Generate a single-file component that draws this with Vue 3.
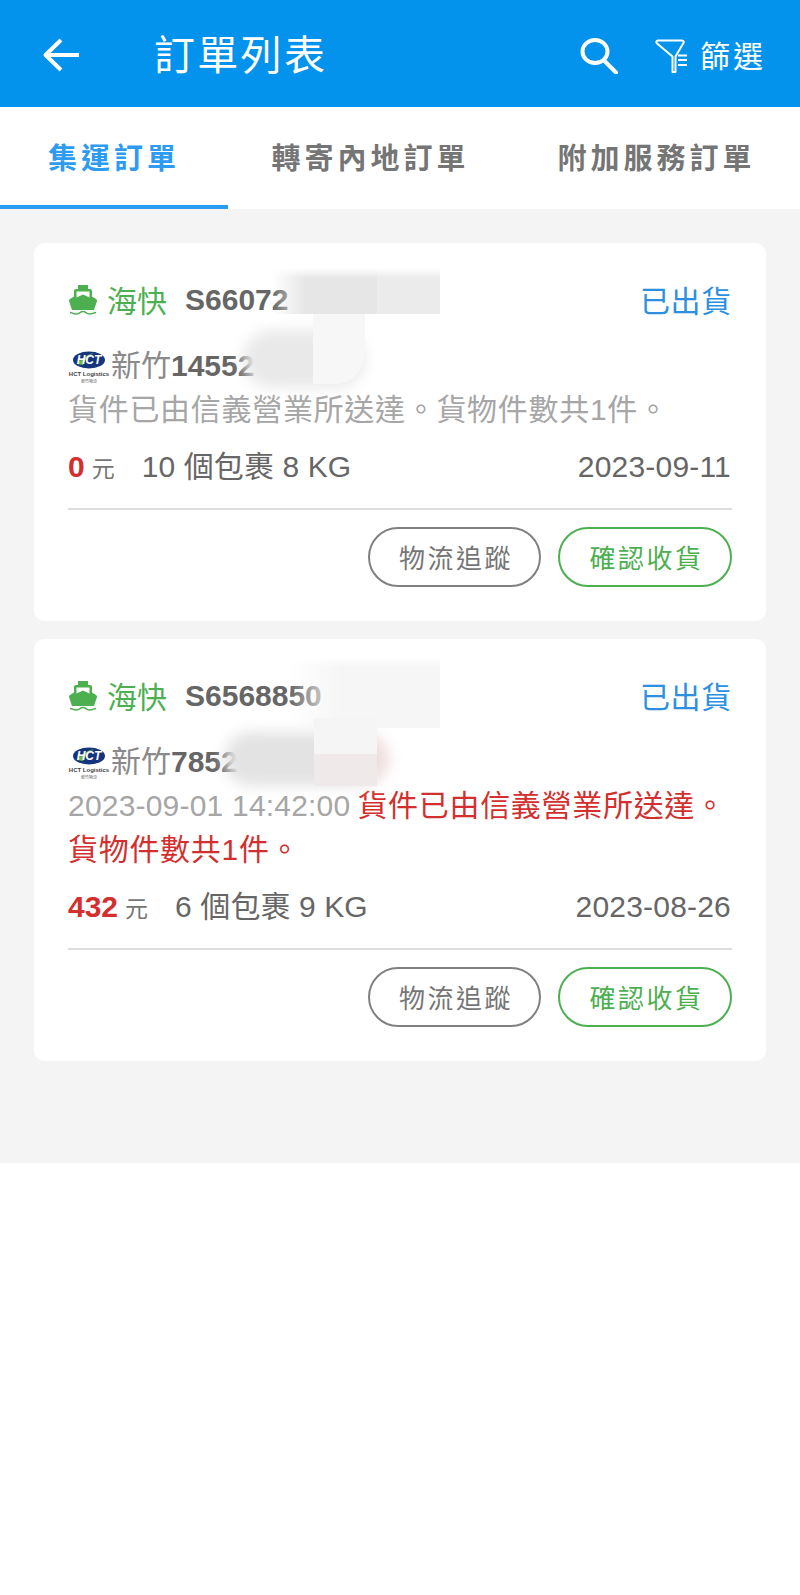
<template>
  <div class="page">
    <header class="topbar">
      <svg class="back" viewBox="0 0 38 34" fill="none" stroke="#fff" stroke-width="4">
        <path d="M19 2 3.500 17 19 32" stroke-linejoin="round" />
        <path d="M4 17h33" />
      </svg>
      <h1 class="title">訂單列表</h1>
      <svg class="search" viewBox="0 0 38 36" fill="none" stroke="#fff" stroke-width="4">
        <ellipse cx="15" cy="13.500" rx="12.500" ry="11.500" />
        <path d="m24 22.500 12 12" stroke-linecap="round" />
      </svg>
      <svg class="funnel" viewBox="0 0 33 34" fill="none" stroke="#fff" stroke-width="2">
        <path d="M3 1.500h24c1.600 0 2.200 1.500 1.300 2.800L20.500 17.500V33h-3V17.500L1.800 4.300C.9 3 1.400 1.500 3 1.500Z" stroke-linejoin="round" />
        <path d="M23 16.500h9M23 21h9M23 26h9" />
      </svg>
      <span class="filter-label">篩選</span>
    </header>

    <nav class="tabs">
      <div v-for="(t, i) in tabs" :key="t" class="tab" :class="{ active: i === 0 }">{{ t }}</div>
    </nav>

    <main class="list">
      <article v-for="o in orders" :key="o.no" class="card">
        <div class="head">
          <svg class="ship" viewBox="0 0 28 30" fill="#4caf50">
            <path d="M9 0h10v4h2a2 2 0 0 1 2 2v5.500L27 14c.9.600 1.200 1.400.9 2.200L25 25H3L.1 16.200c-.3-.8 0-1.600.9-2.200l4-2.500V6a2 2 0 0 1 2-2h2V0ZM7.500 6.500v6L14 9.500l6.500 3v-6h-13Z" fill-rule="evenodd" />
            <path d="M1 27.500c2.200 0 3 1.500 6.500 1.500S11 26.500 14 26.500s3 2.500 6.500 2.500 4.300-1.500 6.500-1.500" fill="none" stroke="#4caf50" stroke-width="1.500" />
          </svg>
          <span class="mode">海快</span>
          <span class="order-no">{{ o.no }}</span>
          <span class="status">已出貨</span>
        </div>
        <div class="carrier">
          <svg class="hct" viewBox="0 0 42 38">
            <ellipse cx="21" cy="13" rx="16" ry="8.500" fill="#16357f" />
            <path d="M9 17c6-7 12-10 17-11-6 3-9 7-11 12Z" fill="#6cbd45" />
            <text x="21" y="17" class="hct-mark">HCT</text>
            <text x="21" y="29" class="hct-name">HCT Logistics</text>
            <text x="21" y="36" class="hct-sub">新竹物流</text>
          </svg>
          <span class="carrier-text"><span>新竹</span><b class="track">{{ o.track }}</b></span>
        </div>
        <p class="msg">
          <span v-if="o.time" class="time">{{ o.time }}</span>
          <span :class="{ alert: o.time }">貨件已由信義營業所送達。貨物件數共1件。</span>
        </p>
        <div class="info">
          <b class="price">{{ o.price }}</b>
          <span class="unit">元</span>
          <span class="pkgs">{{ o.pkgs }}</span>
          <span class="date">{{ o.date }}</span>
        </div>
        <div class="actions">
          <button class="btn">物流追蹤</button>
          <button class="btn ok">確認收貨</button>
        </div>
        <div class="smear s3" :class="o.kind"></div>
        <div class="smear s1" :class="o.kind"></div>
        <div class="smear s2" :class="o.kind"></div>
      </article>
    </main>
  </div>
</template>

<script setup>
const tabs = ['集運訂單', '轉寄內地訂單', '附加服務訂單']

// 單號後段在原圖已被遮蓋，這裡只保留看得到的部分
const orders = [
  {
    kind: 'first',
    no: 'S66072',
    track: '14552',
    time: '',
    price: '0',
    pkgs: '10 個包裹 8 KG',
    date: '2023-09-11'
  },
  {
    kind: 'second',
    no: 'S6568850',
    track: '7852',
    time: '2023-09-01 14:42:00',
    price: '432',
    pkgs: '6 個包裹 9 KG',
    date: '2023-08-26'
  }
]
</script>

<style>
html,
body {
  background: #fff;
}
</style>

<style scoped>
.page {
  width: 800px;
  height: 1595px;
  background: #fff;
  font-family: "Liberation Sans", "Noto Sans CJK TC", sans-serif;
  overflow: hidden;
}

.topbar {
  height: 107px;
  background: #0392ec;
  display: flex;
  align-items: center;
  color: #fff;
  padding: 0 34px 0 42px;
  box-sizing: border-box;
}

.back {
  width: 38px;
  height: 34px;
  margin-top: 2px;
}

.title {
  margin: 5px 0 0 74px;
  font-size: 41px;
  line-height: 56px;
  font-weight: 400;
  letter-spacing: 2.300px;
}

.search {
  width: 38px;
  height: 36px;
  margin: 4px 0 0 auto;
}

.funnel {
  width: 33px;
  height: 34px;
  margin: 5px 0 0 37px;
}

.filter-label {
  margin-left: 12px;
  font-size: 30px;
  letter-spacing: 3px;
}

.tabs {
  height: 102px;
  display: grid;
  grid-template-columns: 228px 285px 1fr;
  background: #fff;
}

.tab {
  display: flex;
  align-items: center;
  justify-content: center;
  font-size: 29px;
  font-weight: 700;
  letter-spacing: 4px;
  color: #757575;
  border-bottom: 4px solid transparent;
  box-sizing: border-box;
}

.tab.active {
  color: #2c9bf0;
  border-bottom-color: #2c9bf0;
}

.list {
  background: #f4f4f4;
  height: 954px;
  padding: 34px 34px 0;
  box-sizing: border-box;
  display: flex;
  flex-direction: column;
  gap: 18px;
}

.card {
  position: relative;
  background: #fff;
  border-radius: 10px;
  padding: 34px;
  overflow: hidden;
}

.head {
  height: 46px;
  display: flex;
  align-items: center;
}

.ship {
  width: 28px;
  height: 30px;
  margin-left: 1px;
}

.mode {
  margin-left: 10px;
  padding-bottom: 2px;
  font-size: 30px;
  color: #4caf50;
}

.order-no {
  margin-left: 18px;
  font-size: 30px;
  font-weight: 700;
  color: #666;
}

.status {
  margin-left: auto;
  padding-bottom: 3px;
  font-size: 30px;
  letter-spacing: 0.700px;
  color: #2c8fe0;
}

.carrier {
  margin-top: 24px;
  height: 38px;
  display: flex;
  align-items: center;
  font-size: 30px;
  color: #8a8a8a;
}

.carrier-text {
  margin-bottom: 6px;
}

.hct {
  width: 42px;
  height: 38px;
  margin-right: 1px;
}

.hct-mark {
  font: italic 700 12px "Liberation Sans", sans-serif;
  fill: #fff;
  text-anchor: middle;
}

.hct-name {
  font: 700 6px "Liberation Sans", sans-serif;
  fill: #444;
  text-anchor: middle;
}

.hct-sub {
  font: 4px "Noto Sans CJK TC", sans-serif;
  fill: #555;
  text-anchor: middle;
}

.track {
  color: #666;
}

.msg {
  margin: 3px 0 0;
  font-size: 30px;
  line-height: 44px;
  letter-spacing: 0.700px;
  color: #a6a6a6;
}

.time {
  letter-spacing: 0.200px;
  margin-right: 7px;
}

.alert {
  color: #d32f2f;
}

.info {
  margin-top: 12px;
  height: 45px;
  display: flex;
  align-items: baseline;
  font-size: 30px;
  line-height: 45px;
  color: #666;
}

.price {
  color: #d32f2f;
}

.unit {
  margin-left: 7px;
  font-size: 23px;
  color: #757575;
}

.pkgs {
  margin-left: 27px;
  letter-spacing: 0.100px;
}

.date {
  margin-left: auto;
  margin-right: 1px;
  letter-spacing: 0.200px;
}

.actions {
  margin-top: 19px;
  border-top: 2px solid #ddd;
  padding-top: 17px;
  display: flex;
  justify-content: flex-end;
  gap: 17px;
}

.btn {
  width: 173px;
  height: 60px;
  padding: 0 0 2px 3px;
  background: #fff;
  border: 2px solid #808080;
  border-radius: 30px;
  font-family: inherit;
  font-size: 26px;
  letter-spacing: 2.500px;
  color: #757575;
}

.btn.ok {
  width: 174px;
  border-color: #4caf50;
  color: #4caf50;
}

/* 遮蓋單號的模糊塊 */
.smear {
  position: absolute;
  pointer-events: none;
}

.s1.first {
  left: 238px;
  top: 25px;
  width: 168px;
  height: 46px;
  background: linear-gradient(to right, rgba(230, 230, 230, 0), #e6e6e6 34px, #e6e6e6 105px, #ebebeb 105px);
  mask-image: linear-gradient(to bottom, transparent, #000 10px);
}

.s2.first {
  left: 279px;
  top: 71px;
  width: 52px;
  height: 70px;
  background: #f7f7f7;
  border-radius: 0 0 30px 0;
}

.s3.first {
  left: 209px;
  top: 87px;
  width: 122px;
  height: 58px;
  background: #e9e9e9;
  border-radius: 30px;
  filter: blur(7px);
}

.s1.second {
  left: 255px;
  top: 18px;
  width: 151px;
  height: 71px;
  background: linear-gradient(to right, rgba(246, 246, 246, 0), #f6f6f6 50px);
  mask-image: linear-gradient(to bottom, transparent, #000 10px);
}

.s2.second {
  left: 280px;
  top: 79px;
  width: 63px;
  height: 68px;
  background: linear-gradient(to bottom, #f5f5f5 36px, #f0e9e9 36px);
}

.s3.second {
  left: 190px;
  top: 93px;
  width: 165px;
  height: 54px;
  background: linear-gradient(to right, #e3e3e3 70%, #f0dcdc);
  border-radius: 30px;
  filter: blur(7px);
}
</style>
